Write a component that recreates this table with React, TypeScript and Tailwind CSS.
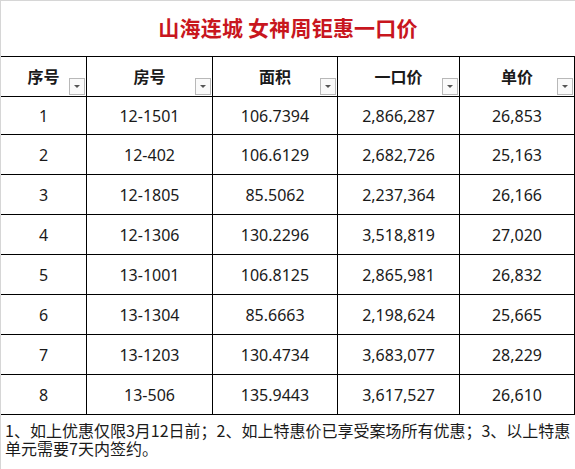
import React from "react";

const rows = [
  ["1", "12-1501", "106.7394", "2,866,287", "26,853"],
  ["2", "12-402", "106.6129", "2,682,726", "25,163"],
  ["3", "12-1805", "85.5062", "2,237,364", "26,166"],
  ["4", "12-1306", "130.2296", "3,518,819", "27,020"],
  ["5", "13-1001", "106.8125", "2,865,981", "26,832"],
  ["6", "13-1304", "85.6663", "2,198,624", "25,665"],
  ["7", "13-1203", "130.4734", "3,683,077", "28,229"],
  ["8", "13-506", "135.9443", "3,617,527", "26,610"],
];

const headers = ["序号", "房号", "面积", "一口价", "单价"];
const widths = ["w-[86px]", "w-[126px]", "w-[125px]", "w-[122px]", "w-[115px]"];

function FilterBtn() {
  return (
    <div className="absolute right-[1px] bottom-[1px] w-[16px] h-[17px] border border-[#b8b8b8] bg-[#fafafa] flex items-center justify-center">
      <svg width="8" height="5" viewBox="0 0 8 5">
        <polygon points="1,1 7,1 4,4" fill="#555" />
      </svg>
    </div>
  );
}

export default function App() {
  const font = { fontFamily: '"Noto Sans", "Noto Sans CJK SC", sans-serif' };
  const cjk = { fontFamily: '"Noto Sans CJK SC", sans-serif' };
  return (
    <div
      className="w-[575px] h-[469px] bg-white border-t border-l border-[#d6d6d6] overflow-hidden text-[#1a1a1a]"
      style={font}
    >
      <div className="h-[55px] flex items-center justify-center pb-[1px]">
        <span className="text-[21px] font-bold text-[#c8161e] tracking-[0.2px]" style={cjk}>
          山海连城 女神周钜惠一口价
        </span>
      </div>
      <div className="border-t border-black">
        <div className="flex h-[40px] border-b border-black">
          {headers.map((h, i) => (
            <div
              key={h}
              className={`${widths[i]} relative border-r border-black flex items-center justify-center text-[16px] font-bold`}
              style={cjk}
            >
              <span className="-mt-[2px]">{h}</span>
              <FilterBtn />
            </div>
          ))}
        </div>
        {rows.map((r, ri) => (
          <div
            key={ri}
            className={`flex border-b border-black ${ri === 0 ? "h-[38px]" : "h-[40px]"}`}
          >
            {r.map((c, i) => (
              <div
                key={i}
                className={`${widths[i]} border-r border-black flex items-center justify-center text-[16px]`}
              >
                {c}
              </div>
            ))}
          </div>
        ))}
      </div>
      <p
        className="ml-[4px] w-[570px] pt-[6px] text-[16px] leading-[18px]"
        style={cjk}
      >
        1、如上优惠仅限3月12日前；2、如上特惠价已享受案场所有优惠；3、以上特惠单元需要7天内签约。
      </p>
    </div>
  );
}
